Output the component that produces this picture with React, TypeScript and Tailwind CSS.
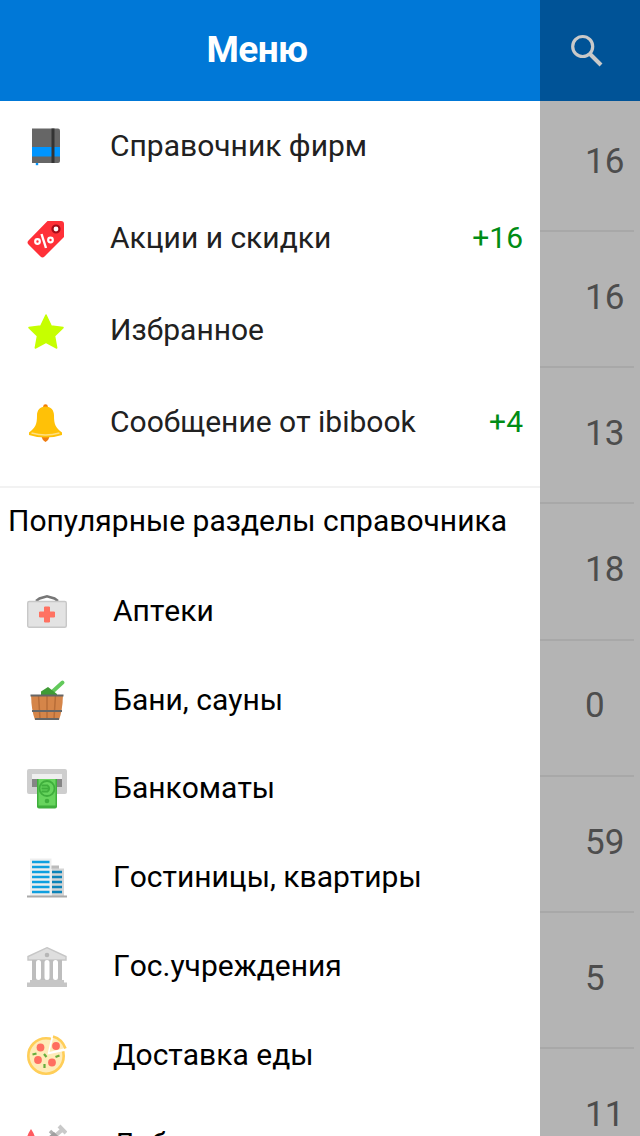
import React from "react";

const MENU = [
  { label: "Справочник фирм", icon: BookIcon },
  { label: "Акции и скидки", icon: TagIcon, badge: "+16" },
  { label: "Избранное", icon: StarIcon },
  { label: "Сообщение от ibibook", icon: BellIcon, badge: "+4" },
];

const POPULAR = [
  { label: "Аптеки", icon: FirstAidIcon },
  { label: "Бани, сауны", icon: SaunaIcon },
  { label: "Банкоматы", icon: AtmIcon },
  { label: "Гостиницы, квартиры", icon: HotelIcon },
  { label: "Гос.учреждения", icon: GovernmentIcon },
  { label: "Доставка еды", icon: PizzaIcon },
  { label: "Лаборатории", icon: LabIcon },
];

const COUNTS = [16, 16, 13, 18, 0, 59, 5, 11];

function BookIcon() {
  return (
    <svg viewBox="0 0 40 40" className="size-10">
      <path d="M6 1.500h26a2 2 0 0 1 2 2v30.500a2 2 0 0 1-2 2H6z" fill="#666" />
      <path d="M6 20h28v9.500H6z" fill="#0095ff" />
      <path d="M25.500 1.500h3V36h-3z" fill="#333" />
      <path d="M9.800 36h2.400v2.200H9.800z" fill="#0095ff" />
    </svg>
  );
}

function TagIcon() {
  return (
    <svg viewBox="0 0 40 40" className="size-10">
      <path d="M21.500 2H35q3 0 3 3v13L18.500 37.500q-2 2-4 0L2.500 25.500q-2-2 0-4z" fill="#ff3038" />
      <circle cx="30" cy="10" r="3.500" fill="#fff" stroke="#a50c19" strokeWidth="2.200" />
      <g fill="none" stroke="#fff">
        <circle cx="11.500" cy="22.500" r="2.300" strokeWidth="2.200" />
        <circle cx="24.500" cy="21" r="2.300" strokeWidth="2.200" />
        <path d="m15.500 15 4.500 14" strokeWidth="2.400" />
      </g>
    </svg>
  );
}

function StarIcon() {
  return (
    <svg viewBox="0 0 40 40" className="size-10">
      <path
        d="m20 4 5.200 11L37 16.600l-8.500 8.300L30.700 37 20 31.300 9.300 37l2.200-12.100L3 16.600 14.800 15z"
        fill="#c6ff00"
        stroke="#c6ff00"
        strokeWidth="1.500"
        strokeLinejoin="round"
      />
    </svg>
  );
}

function BellIcon() {
  return (
    <svg viewBox="0 0 40 40" className="size-10">
      <circle cx="19.500" cy="3.500" r="2.300" fill="#f57c00" />
      <path d="M15.500 32h8q0 5-4 7-4-2-4-7z" fill="#ef7c10" />
      <path d="M19.500 3.500c5.500 0 8.500 3.800 8.500 9 0 9 1.500 12 8 17V32q-8 2.500-16.500 2.500T3 32v-2.500C9.500 24.500 11 21.500 11 12.500c0-5.200 3-9 8.500-9z" fill="#ffc107" />
      <path d="M5.500 30q14 4 28 0" fill="none" stroke="#ffe082" strokeWidth="1.600" />
    </svg>
  );
}

function FirstAidIcon() {
  return (
    <svg viewBox="0 0 40 40" className="size-10">
      <path d="m9 10 3.500-2.500L20 5.300l7.500 2.200L31 10" fill="none" stroke="#777" strokeWidth="2.600" />
      <rect x=".7" y="10.500" width="38.600" height="25.800" rx="1.500" fill="#e3e3e3" stroke="#c8c8c8" strokeWidth="1.400" />
      <path d="M17.500 16h5v5h5v5h-5v5h-5v-5h-5v-5h5z" fill="#ff7262" stroke="#ff7262" strokeLinejoin="round" />
    </svg>
  );
}

function SaunaIcon() {
  return (
    <svg viewBox="0 0 40 40" className="size-10">
      <path d="m24 13 11.500-10.500" stroke="#62c95b" strokeWidth="3.800" strokeLinecap="round" />
      <path d="M14 15v-3.500L21 7l9 7v1z" fill="#3f9b35" />
      <path d="M4 15h32q-.5 16-4 25H8Q4.500 31 4 15z" fill="#d58549" />
      <path d="M11.500 15l1.500 24M20 15v24M28.500 15 27 39" stroke="#b86d38" strokeWidth="1.500" />
      <path d="M3.500 15.500h33M5 31h30M8 39h24" stroke="#666" strokeWidth="2.200" />
    </svg>
  );
}

function AtmIcon() {
  return (
    <svg viewBox="0 0 40 40" className="size-10">
      <rect width="40" height="25" rx="2" fill="#cecece" />
      <path d="M5 5h30v5H5z" fill="#efefef" />
      <path d="M5 10h30v8H5z" fill="#858585" />
      <path d="M10 10h20v27.500q0 2-2 2H12q-2 0-2-2z" fill="#3fae3c" />
      <path d="M11.500 10h17v26.500h-17z" fill="#67d45d" />
      <circle cx="20" cy="19.500" r="7.500" fill="none" stroke="#3fae3c" strokeWidth="1.800" />
      <path d="M14.500 19.500h7.500m-7.500-3h6q3.500 3 0 6h-6" fill="none" stroke="#3fae3c" strokeWidth="1.800" />
      <circle cx="20" cy="32" r="2.300" fill="#3fae3c" />
    </svg>
  );
}

function HotelIcon() {
  return (
    <svg viewBox="0 0 40 40" className="size-10">
      <path d="M24 7.500h8V11h-8z" fill="#bbb" />
      <path d="M24.500 10.500H37V38H24.500z" fill="#d5d5d5" />
      <path d="M3 .5h21.500V38H3z" fill="#eee" />
      <path d="M5 4h17.500M5 9h17.500M5 14h17.500M5 19h17.500M5 24h17.500M5 29h17.500M5 34h17.500" stroke="#0e9fdf" strokeWidth="2.500" />
      <path d="M25 14h10M25 19h10M25 24h10M25 29h10M25 34h10" stroke="#0b83b8" strokeWidth="2.500" />
      <path d="M0 38.500h40" stroke="#aaa" strokeWidth="2" />
    </svg>
  );
}

function GovernmentIcon() {
  return (
    <svg viewBox="0 0 40 40" className="size-10">
      <path d="M20 .7 39 9.500V13H1V9.500z" fill="#dedede" stroke="#c6c6c6" strokeWidth="1.400" />
      <circle cx="20" cy="8" r="2.300" fill="#b6b6b6" />
      <path d="M5 13h30v21H5z" fill="#bdbdbd" />
      <path d="M11.500 15.500v15M20 15.500v15M28.500 15.500v15" stroke="#fff" strokeWidth="5" strokeLinecap="round" />
      <path d="M3 33h34v2.500h3V40H0v-4.500h3z" fill="#c6c6c6" />
    </svg>
  );
}

function PizzaIcon() {
  return (
    <svg viewBox="0 0 40 40" className="size-10">
      <circle cx="19" cy="21" r="17.700" fill="#ffebb8" stroke="#ffce58" strokeWidth="2.600" />
      <path d="M20.500 19.500 25-1 42 15z" fill="#fff" />
      <path d="M22.500 17 26.500 1.500Q35 4 38.500 13z" fill="#ffebb8" />
      <path d="M26 1.500Q35 4 38.500 13.500" fill="none" stroke="#ffce58" strokeWidth="2.600" />
      <g fill="#ff6e60">
        <circle cx="13.500" cy="12.500" r="3.900" />
        <circle cx="29" cy="11" r="3.900" />
        <circle cx="11" cy="25" r="3.900" />
        <circle cx="25" cy="27.500" r="3.900" />
      </g>
      <path d="m5.500 19.500 4-1M17 19l2.500 3M28.500 22l4-1.500M17.500 29v4" stroke="#67ad3d" strokeWidth="2.200" />
    </svg>
  );
}

function LabIcon() {
  return (
    <svg viewBox="0 0 40 40" className="size-10">
      <path d="M4 5q6 9 4 15H0q-2-6 4-15z" fill="#ff5a5f" />
      <path d="m32 2 7 7M35.500 5.500 28 12" stroke="#c9c9c9" strokeWidth="4" />
      <path d="m23 7 12 11" stroke="#b0b0b0" strokeWidth="3.500" />
      <path d="m27 8 7 7-12 12-8-8z" fill="#9f9f9f" />
    </svg>
  );
}

const App = () => {
  return (
    <div className="flex h-[1136px] w-[640px] overflow-hidden bg-white font-[Roboto,'Noto_Sans',sans-serif] [font-kerning:none]">
      <aside className="w-[540px] shrink-0 bg-white">
        <header className="flex h-[101px] items-center justify-center bg-[#0078d7] pr-[26px] pb-px">
          <h1 className="text-[37px] font-bold tracking-[-0.6px] text-white">Меню</h1>
        </header>

        <nav className="h-[387px] border-b-2 border-[#f2f2f2]">
          {MENU.map(({ label, icon: Icon, badge }) => (
            <a key={label} className="flex h-[92px] items-center pr-[17px] pl-[26px] text-[30px] text-[#212121]">
              <Icon />
              <span className="ml-11 flex-1 pb-[3px]">{label}</span>
              {badge && <span className="pb-[3px] text-[#008c15]">{badge}</span>}
            </a>
          ))}
        </nav>

        <section>
          <h2 className="flex h-[79px] items-center pb-[14px] pl-2 text-[30px] text-black">
            Популярные разделы справочника
          </h2>
          {POPULAR.map(({ label, icon: Icon }) => (
            <a key={label} className="flex h-[88.800px] items-center pl-[26.500px] text-[30px] text-black">
              <Icon />
              <span className="ml-[46.500px] pb-[2px]">{label}</span>
            </a>
          ))}
        </section>
      </aside>

      {/* Dimmed list behind the drawer */}
      <main className="flex-1 bg-[#b4b4b4]">
        <div className="flex h-[101px] items-center bg-[#005397] pl-[30px]">
          <svg viewBox="0 0 34 34" className="size-[34px] fill-none stroke-[#c9c9c9]">
            <circle cx="12.700" cy="12.500" r="10" strokeWidth="3.200" />
            <path d="m20 20 11 11" strokeWidth="4" />
          </svg>
        </div>
        <ul className="pr-[6px]">
          {COUNTS.map((count, i) => (
            <li
              key={i}
              className="flex h-[136.200px] items-center border-b-2 border-[#a8a8a8] pb-[2px] pl-[45px] text-[35px] text-[#4d4d4d] first:h-[131px] first:pb-[7px]"
            >
              {count}
            </li>
          ))}
        </ul>
      </main>
    </div>
  );
};

export default App;
